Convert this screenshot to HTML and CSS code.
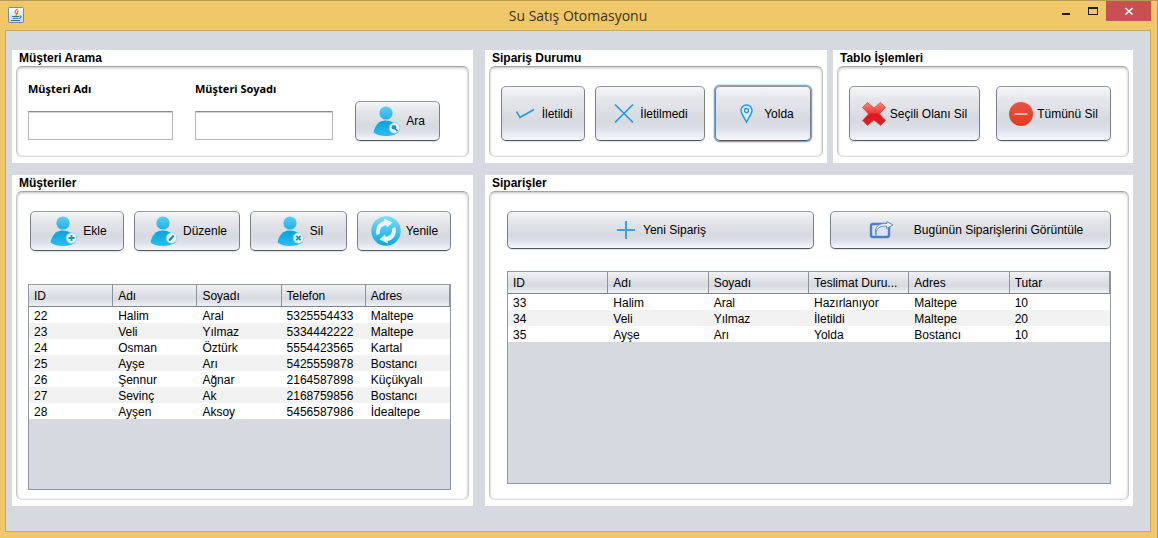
FILE: index.html
```html
<!DOCTYPE html>
<html lang="tr">
<head>
<meta charset="utf-8">
<title>Su Satış Otomasyonu</title>
<link rel="stylesheet" href="styles.css">
</head>
<body>
<svg class="defs" width="0" height="0" aria-hidden="true">
  <defs>
    <linearGradient id="head" x1="0" y1="0" x2="0" y2="1"><stop offset="0" stop-color="#5fcdf5"/><stop offset="1" stop-color="#1cb2e8"/></linearGradient>
    <linearGradient id="torso" x1="0" y1="0" x2="0" y2="1"><stop offset="0" stop-color="#05a3dc"/><stop offset="1" stop-color="#2cbdf0"/></linearGradient>
    <linearGradient id="disc" x1="0" y1="0" x2="0" y2="1"><stop offset="0" stop-color="#7fdcfa"/><stop offset="1" stop-color="#08a8e2"/></linearGradient>
    <linearGradient id="cross" x1="0" y1="0" x2="0" y2="1"><stop offset="0" stop-color="#f58a7c"/><stop offset=".45" stop-color="#ee3a35"/><stop offset=".5" stop-color="#e8141a"/><stop offset="1" stop-color="#d2202c"/></linearGradient>
    <linearGradient id="stop" x1="0" y1="0" x2="0" y2="1"><stop offset="0" stop-color="#e8544a"/><stop offset="1" stop-color="#e5391a"/></linearGradient>
    <linearGradient id="java" x1="0" y1="0" x2="0" y2="1"><stop offset="0" stop-color="#fdfdfd"/><stop offset="1" stop-color="#c3d5e4"/></linearGradient>
    <symbol id="person" viewBox="0 0 32 32">
      <circle cx="16" cy="8" r="6.6" fill="url(#head)"/>
      <path d="M3.5 27.5C5 20 9 15.5 16 15.5S27 20 28.500 27.500C25 30 21 31 16 31S6.500 30 3.500 27.500Z" fill="url(#torso)"/>
      <circle cx="24.500" cy="23" r="5.300" fill="#e9f7fd" stroke="#83cdec" stroke-width=".7"/>
    </symbol>
  </defs>
</svg>
<div class="window">
  <header class="titlebar">
    <svg class="app-icon" width="16" height="16" viewBox="0 0 16 16"><rect x=".5" y=".5" width="15" height="15" rx="1" fill="url(#java)" stroke="#6e8fa9"/><path d="M9.500 2C6.500 4 6.500 5 8 6.500S8 8.500 7.500 8.700M10.500 4C8.700 5 9 6 9.500 7" fill="none" stroke="#ee7a1c" stroke-width="1.200"/><path d="M4 9.500h7M5 11.200h5.500M3 13.500h9M11.500 9c2.500-.5 2 2-.5 2.300" fill="none" stroke="#3f7198" stroke-width="1.100"/></svg>
    <h1 class="window-title">Su Satış Otomasyonu</h1>
    <div class="window-controls">
      <button class="control" type="button" aria-label="Simge durumuna küçült"><svg width="10" height="10" viewBox="0 0 10 10"><path d="M1 7h8v2H1z" fill="#1e1e1e"/></svg></button>
      <button class="control" type="button" aria-label="Ekranı kapla"><svg width="10" height="10" viewBox="0 0 10 10"><path d="M0 1h10v8H0zM1 3v5h8V3z" fill="#1e1e1e" fill-rule="evenodd"/></svg></button>
      <button class="control close" type="button" aria-label="Kapat"><svg width="10" height="10" viewBox="0 0 10 10"><path d="M1.500 2l7 6.500M8.500 2l-7 6.500" stroke="#fff" stroke-width="1.700"/></svg></button>
    </div>
  </header>

  <main class="client">
    <section class="panel">
      <h2 class="panel-title">Müşteri Arama</h2>
      <form class="group search">
        <div class="field field-name">
          <label for="ad">Müşteri Adı</label>
          <input id="ad" type="text">
        </div>
        <div class="field field-surname">
          <label for="soyad">Müşteri Soyadı</label>
          <input id="soyad" type="text">
        </div>
        <button class="btn w85" type="button"><svg width="32" height="32" viewBox="0 0 32 32"><use href="#person"/><circle cx="24" cy="22.300" r="2.300" fill="#2c8fc4"/><path d="M25 23.500l2.500 2.700" stroke="#2c8fc4" stroke-width="1.700"/></svg>Ara</button>
      </form>
    </section>

    <div class="top-right">
      <section class="panel panel-status">
        <h2 class="panel-title">Sipariş Durumu</h2>
        <div class="group actions status-actions">
          <button class="btn w84" type="button"><svg width="24" height="24" viewBox="0 0 24 24"><path d="M2.500 9.500l3.500 6L20 7.500" fill="none" stroke="#1e97e0" stroke-width="1.500"/></svg>İletildi</button>
          <button class="btn w110" type="button"><svg width="24" height="24" viewBox="0 0 24 24"><path d="M3 2.500l18 18M21 2.500l-18 18" stroke="#1e97e0" stroke-width="1.500"/></svg>İletilmedi</button>
          <button class="btn w96 focused" type="button"><svg width="28" height="24" viewBox="0 0 28 24"><path d="M14.500 20C12.500 15.500 9 12 9 8.500a5.500 5.500 0 0 1 11 0C20 12 16.500 15.500 14.500 20Z" fill="#d3edfb" stroke="#1e97e0" stroke-width="1.400"/><circle cx="14.500" cy="8.500" r="2" fill="#f1f5fa" stroke="#1e97e0" stroke-width="1.300"/></svg>Yolda</button>
        </div>
      </section>
      <section class="panel panel-table">
        <h2 class="panel-title">Tablo İşlemleri</h2>
        <div class="group actions table-actions">
          <button class="btn w131" type="button"><svg width="24" height="24" viewBox="0 0 24 24"><path d="M5.500.5L12 6 18.500.5l5 5L17.500 12l6 6.500-5 5L12 18l-6.500 5.500-5-5L6.500 12l-6-6.500Z" fill="url(#cross)" stroke="#d8403a" stroke-width=".7"/></svg>Seçili Olanı Sil</button>
          <button class="btn w115" type="button"><svg width="24" height="24" viewBox="0 0 24 24"><circle cx="12" cy="12" r="12" fill="url(#stop)"/><path d="M5.500 12h13" stroke="#f6cfc4" stroke-width="1.600"/></svg>Tümünü Sil</button>
        </div>
      </section>
    </div>

    <section class="panel">
      <h2 class="panel-title">Müşteriler</h2>
      <div class="group customers">
        <div class="toolbar customer-tools">
          <button class="btn w94" type="button"><svg width="32" height="32" viewBox="0 0 32 32"><use href="#person"/><path d="M24.500 20v6M21.500 23h6" stroke="#2590c6" stroke-width="1.800"/></svg>Ekle</button>
          <button class="btn w106" type="button"><svg width="32" height="32" viewBox="0 0 32 32"><use href="#person"/><path d="M22.300 25.500l4.400-5" stroke="#2583b5" stroke-width="2.200"/></svg>Düzenle</button>
          <button class="btn w97" type="button"><svg width="32" height="32" viewBox="0 0 32 32"><use href="#person"/><path d="M22.300 20.800l4.400 4.400M26.700 20.800l-4.400 4.400" stroke="#2590c6" stroke-width="1.900"/></svg>Sil</button>
          <button class="btn w94" type="button"><svg width="32" height="32" viewBox="0 0 32 32"><circle cx="16" cy="16" r="14.700" fill="url(#disc)"/><path d="M6.500 20C5 12.500 8.500 7 14.500 6L14 3.500 22.500 7.500 17 12.500 16.200 10C11.500 11 9.200 14.500 10 18.500Z" fill="#eaf9ff"/><path d="M25.500 12C27 19.500 23.500 25 17.500 26L18 28.500 9.500 24.500 15 19.500 15.800 22C20.500 21 22.800 17.500 22 13.500Z" fill="#eaf9ff"/></svg>Yenile</button>
        </div>
        <div class="grid-view">
          <table>
            <thead><tr><th>ID</th><th>Adı</th><th>Soyadı</th><th>Telefon</th><th>Adres</th></tr></thead>
            <tbody>
              <tr><td>22</td><td>Halim</td><td>Aral</td><td>5325554433</td><td>Maltepe</td></tr>
              <tr><td>23</td><td>Veli</td><td>Yılmaz</td><td>5334442222</td><td>Maltepe</td></tr>
              <tr><td>24</td><td>Osman</td><td>Öztürk</td><td>5554423565</td><td>Kartal</td></tr>
              <tr><td>25</td><td>Ayşe</td><td>Arı</td><td>5425559878</td><td>Bostancı</td></tr>
              <tr><td>26</td><td>Şennur</td><td>Ağnar</td><td>2164587898</td><td>Küçükyalı</td></tr>
              <tr><td>27</td><td>Sevinç</td><td>Ak</td><td>2168759856</td><td>Bostancı</td></tr>
              <tr><td>28</td><td>Ayşen</td><td>Aksoy</td><td>5456587986</td><td>İdealtepe</td></tr>
            </tbody>
          </table>
        </div>
      </div>
    </section>

    <section class="panel">
      <h2 class="panel-title">Siparişler</h2>
      <div class="group orders">
        <div class="toolbar order-tools">
          <button class="btn w307" type="button"><svg width="24" height="24" viewBox="0 0 24 24"><path d="M11 3v18M2 12h18" stroke="#3aa3e3" stroke-width="2"/></svg>Yeni Sipariş</button>
          <button class="btn w281" type="button"><svg width="52" height="24" viewBox="0 0 52 24"><rect x="13" y="6" width="18" height="13" rx="2" fill="#dbe4f3" stroke="#4c7fc4" stroke-width="2.400"/><path d="M18 17.500C17.500 10.500 21.500 8 28.500 8v2.500L35 7 29 3.500V5.500C21 5 15.500 8.500 18 17.500Z" fill="#eef3fb" stroke="#5f8dcc" stroke-width="1"/></svg>Bugünün Siparişlerini Görüntüle</button>
        </div>
        <div class="grid-view">
          <table>
            <thead><tr><th>ID</th><th>Adı</th><th>Soyadı</th><th>Teslimat Duru...</th><th>Adres</th><th>Tutar</th></tr></thead>
            <tbody>
              <tr><td>33</td><td>Halim</td><td>Aral</td><td>Hazırlanıyor</td><td>Maltepe</td><td>10</td></tr>
              <tr><td>34</td><td>Veli</td><td>Yılmaz</td><td>İletildi</td><td>Maltepe</td><td>20</td></tr>
              <tr><td>35</td><td>Ayşe</td><td>Arı</td><td>Yolda</td><td>Bostancı</td><td>10</td></tr>
            </tbody>
          </table>
        </div>
      </div>
    </section>
  </main>
</div>
</body>
</html>
```
FILE: styles.css
```css
* { box-sizing: border-box; }
body { margin: 0; font: 12px/16px "Liberation Sans", Arial, sans-serif; color: #000; }
h1, h2 { margin: 0; }
.defs { position: absolute; }
svg { display: block; flex: none; }

.window {
  display: flex;
  flex-direction: column;
  min-height: 100vh;
  padding: 0 6px 6px 5px;
  background: #f0c869;
  border-top: 1px solid #b99a50;
  border-right: 1px solid #b99a50;
}
.titlebar {
  display: grid;
  grid-template-columns: 1fr auto 1fr;
  align-items: start;
  height: 29px;
}
.app-icon { margin: 6px 0 0 3px; }
.window-title {
  font: 14px/29px "Open Sans", "Noto Sans", sans-serif;
  color: #3b3219;
}
.window-controls { display: flex; justify-content: flex-end; }
.control {
  display: flex;
  align-items: center;
  justify-content: center;
  width: 27px;
  height: 20px;
  padding: 0;
  border: 0;
  background: none;
}
.control.close { width: 45px; background: #c75050; }

.client {
  flex: 1;
  display: grid;
  grid-template-columns: minmax(0, 461fr) minmax(0, 648fr);
  grid-template-rows: 113px 1fr;
  gap: 12px;
  padding: 19px 17px 25px 6px;
  background: #d6d9e0;
  border: 1px solid #c9a95e;
}
.top-right { display: flex; gap: 6px; }
.panel { display: flex; flex-direction: column; min-width: 0; padding: 0 4px 6px; background: #fff; }
.panel-status { flex: 342 1 342px; }
.panel-table { flex: 300 1 300px; }
.panel-title { padding: 1px 3px 0; font-size: 12px; line-height: 15px; }
.group {
  flex: 1;
  display: flex;
  border: 1px solid;
  border-color: #a4a4a4 #c6c6c6 #dcdcdc;
  border-radius: 6px;
  box-shadow: inset 0 1px 3px rgba(0, 0, 0, .26);
}

.search { align-items: flex-end; padding: 0 28px 15px 11px; }
.field { display: flex; flex-direction: column; gap: 14px; padding-bottom: 1px; }
.field-name { flex: 145 1 145px; margin-right: 22px; }
.field-surname { flex: 138 1 138px; margin-right: 22px; }
.field label { font: bold 11px/16px "Noto Sans", "Open Sans", sans-serif; white-space: nowrap; }
.field input {
  width: 100%;
  height: 29px;
  padding: 4px 6px;
  font: inherit;
  background: #fff;
  border: 1px solid #b5b5b5;
  border-top-color: #8d8d8d;
  box-shadow: inset 0 1px 0 #d4d4d4;
}

.btn {
  display: flex;
  align-items: center;
  justify-content: center;
  gap: 4px;
  min-width: 0;
  height: 40px;
  padding: 0;
  font: inherit;
  color: #000;
  white-space: nowrap;
  border: 1px solid;
  border-color: #979aa1 #7b7f87 #54585f;
  border-radius: 5px;
  background: linear-gradient(#f4f5f7, #e4e6ea 25%, #d6d9e0 65%, #dde0e8 80%, #f4f7fd);
  box-shadow: 0 1px 1px rgba(0, 0, 0, .12);
}
.focused { box-shadow: 0 0 0 1px #7ba3cc, 0 0 2px 1px #7ba3cc; }
.w84 { flex: 84 1 84px; }
.w85 { flex: 85 1 85px; }
.w94 { flex: 94 1 94px; }
.w96 { flex: 96 1 96px; }
.w97 { flex: 97 1 97px; }
.w106 { flex: 106 1 106px; }
.w110 { flex: 110 1 110px; }
.w115 { flex: 115 1 115px; }
.w131 { flex: 131 1 131px; }
.w281 { flex: 281 1 281px; }
.w307 { flex: 307 1 307px; }

.actions { align-items: flex-start; padding: 19px 11px 0; }
.actions .btn { height: 55px; }
.status-actions { gap: 10px; }
.table-actions { gap: 16px; padding-right: 17px; }

.toolbar { display: flex; }
.customers { flex-direction: column; gap: 33px; padding: 19px 17px 9px 11px; }
.customer-tools { gap: 10px; padding-left: 2px; }
.orders { flex-direction: column; gap: 22px; padding: 19px 17px 15px; }
.order-tools { gap: 16px; }
.order-tools .btn { height: 38px; }

.grid-view { flex: 1; background: #d6d9e0; border: 1px solid #9297a1; }
table { width: 100%; table-layout: fixed; border-collapse: separate; border-spacing: 0; }
th, td { padding: 0 0 0 5px; text-align: left; white-space: nowrap; }
th {
  height: 22px;
  font-weight: normal;
  border-right: 1px solid #8d929b;
  border-bottom: 1px solid #7d828b;
  background: linear-gradient(#f1f2f4, #e2e4e8 35%, #d6d9e0 65%, #eef1f7);
}
td { height: 16px; padding-top: 2px; line-height: 14px; background: #fff; }
tbody tr:nth-child(even) td { background: #f2f2f2; }
```
